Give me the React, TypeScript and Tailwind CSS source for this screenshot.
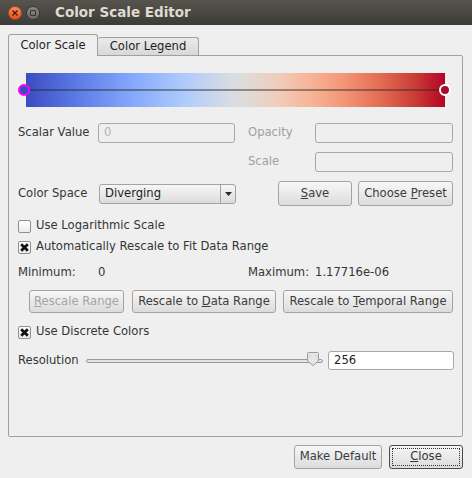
import React from 'react';

const btn =
  'flex items-center justify-center rounded-[3px] border border-[#a3a3a3] bg-gradient-to-b from-[#f7f7f7] to-[#dcdcdc] text-[#3c3c3c]';

function Check({ checked }: { checked: boolean }) {
  return (
    <div className="flex h-[13px] w-[13px] items-center justify-center rounded-[2px] border border-[#8f8f8f] bg-gradient-to-b from-[#ffffff] to-[#ececec]">
      {checked && (
        <svg width="9" height="9" viewBox="0 0 9 9">
          <path d="M1.2 1.2 L7.8 7.8 M7.8 1.2 L1.2 7.8" stroke="#111" strokeWidth="2.8" strokeLinecap="butt" />
        </svg>
      )}
    </div>
  );
}

export default function App() {
  return (
    <div
      className="flex h-[478px] w-[472px] flex-col bg-[#efefef] text-[11.6px] text-[#353535]"
      style={{ fontFamily: '"DejaVu Sans", "Liberation Sans", sans-serif' }}
    >
      {/* title bar */}
      <div className="flex h-[25px] items-center bg-gradient-to-b from-[#56544d] to-[#3c3b37]">
        <div className="ml-[8px] flex h-[14px] w-[14px] items-center justify-center rounded-full border border-[#b8441c] bg-gradient-to-b from-[#f68b5c] to-[#e4511e]">
          <svg width="6" height="6" viewBox="0 0 6 6">
            <path d="M0.5 0.5 L5.5 5.5 M5.5 0.5 L0.5 5.5" stroke="#4a1a08" strokeWidth="1.3" />
          </svg>
        </div>
        <div className="ml-[4px] flex h-[14px] w-[14px] items-center justify-center rounded-full border border-[#3a3935] bg-gradient-to-b from-[#8a8883] to-[#6c6a65]">
          <div className="h-[6px] w-[6px] rounded-[1px] border border-[#33322e]" />
        </div>
        <div className="ml-[15px] text-[13.5px] font-bold text-[#dfdbd2]">Color Scale Editor</div>
      </div>

      {/* tabs */}
      <div className="ml-[8px] mt-[9px] flex items-end">
        <div className="relative z-10 -mb-px flex h-[22px] w-[90px] items-center justify-center rounded-t-[3px] border border-b-0 border-[#a0a0a0] bg-[#efefef] text-[#1e1e1e]">
          Color Scale
        </div>
        <div className="flex h-[18px] w-[101px] items-center justify-center rounded-t-[3px] border border-b-0 border-l-0 border-[#a0a0a0] bg-gradient-to-b from-[#eaeaea] to-[#d8d8d8] text-[#1e1e1e]">
          Color Legend
        </div>
      </div>

      {/* panel */}
      <div className="ml-[8px] h-[382px] w-[455px] rounded-b-[2px] rounded-tr-[2px] border border-[#a0a0a0] bg-[#efefef]">
        {/* gradient */}
        <div className="relative ml-[17px] mt-[17px] h-[34px] w-[419px]">
          <div
            className="h-full w-full"
            style={{
              background:
                'linear-gradient(to right, #3b4cc0 0%, #5b7ae6 12%, #86aafc 26%, #b0ccfb 38%, #d5dbe5 48%, #dedcdb 52%, #f0cdbb 60%, #f7b497 68%, #f39576 76%, #e0654f 86%, #c83b35 93%, #b40426 100%)',
            }}
          />
          <div className="absolute left-0 right-0 top-[16px] h-[2px] bg-[rgba(40,40,40,0.45)]" />
          <div className="absolute left-[-8px] top-[11px] h-[12px] w-[12px] rounded-full border-2 border-[#ff00ff] bg-[#3b4cc0]" />
          <div className="absolute right-[-6px] top-[11px] h-[12px] w-[12px] rounded-full border-2 border-white bg-[#a30a2e]" />
        </div>

        {/* scalar / opacity */}
        <div className="mt-[16px] flex h-[20px] items-center">
          <div className="ml-[9px] w-[80px]">Scalar Value</div>
          <div className="flex h-[20px] w-[137px] items-center rounded-[3px] border border-[#a8a8a8] bg-[#efefef] pl-[5px] text-[#b4b4b4]">
            0
          </div>
          <div className="ml-[13px] w-[67px] text-[#a0a0a0]">Opacity</div>
          <div className="h-[20px] w-[138px] rounded-[3px] border border-[#a8a8a8] bg-[#efefef]" />
        </div>

        {/* scale */}
        <div className="mt-[9px] flex h-[20px] items-center">
          <div className="ml-[239px] w-[67px] text-[#a0a0a0]">Scale</div>
          <div className="h-[20px] w-[138px] rounded-[3px] border border-[#a8a8a8] bg-[#efefef]" />
        </div>

        {/* color space */}
        <div className="mt-[9px] flex h-[25px] items-center">
          <div className="ml-[9px] w-[81px]">Color Space</div>
          <div className="flex h-[20px] w-[137px] items-center rounded-[3px] border border-[#a3a3a3] bg-gradient-to-b from-[#f7f7f7] to-[#dcdcdc]">
            <div className="flex-1 pl-[5px] text-[#1e1e1e]">Diverging</div>
            <div className="flex h-full w-[15px] items-center justify-center border-l border-[#a3a3a3]">
              <svg width="7" height="4" viewBox="0 0 7 4">
                <path d="M0 0 L7 0 L3.5 4 Z" fill="#2a2a2a" />
              </svg>
            </div>
          </div>
          <div className={`${btn} ml-[42px] h-[25px] w-[74px]`}>
            <span>
              <span className="underline">S</span>ave
            </span>
          </div>
          <div className={`${btn} ml-[6px] h-[25px] w-[95px]`}>
            <span>
              Choose <span className="underline">P</span>reset
            </span>
          </div>
        </div>

        {/* checkboxes */}
        <div className="ml-[9px] mt-[12px] flex h-[16px] items-center gap-[5px]">
          <Check checked={false} />
          <span>Use Logarithmic Scale</span>
        </div>
        <div className="ml-[9px] mt-[5px] flex h-[16px] items-center gap-[5px]">
          <Check checked={true} />
          <span>Automatically Rescale to Fit Data Range</span>
        </div>

        {/* min / max */}
        <div className="mt-[10px] flex h-[16px] items-center">
          <div className="ml-[9px] w-[80px]">Minimum:</div>
          <div className="w-[150px]">0</div>
          <div className="w-[67px]">Maximum:</div>
          <div>1.17716e-06</div>
        </div>

        {/* rescale buttons */}
        <div className="mt-[9px] flex h-[23px] items-center">
          <div className={`${btn} ml-[20px] h-[23px] w-[95px] text-[#a5a5a5]`}>
            <span>
              <span className="underline">R</span>escale Range
            </span>
          </div>
          <div className={`${btn} ml-[8px] h-[23px] w-[144px]`}>
            <span>
              Rescale to <span className="underline">D</span>ata Range
            </span>
          </div>
          <div className={`${btn} ml-[7px] h-[23px] w-[170px]`}>
            <span>
              Rescale to <span className="underline">T</span>emporal Range
            </span>
          </div>
        </div>

        {/* discrete */}
        <div className="ml-[9px] mt-[11px] flex h-[16px] items-center gap-[5px]">
          <Check checked={true} />
          <span>Use Discrete Colors</span>
        </div>

        {/* resolution */}
        <div className="mt-[11px] flex h-[19px] items-center">
          <div className="ml-[9px] w-[68px]">Resolution</div>
          <div className="relative flex h-[19px] w-[237px] items-center">
            <div className="h-[4px] w-full rounded-[2px] border border-[#9a9a9a] bg-[#e4e4e4]" />
            <svg className="absolute left-[221px] top-[1px]" width="12" height="14" viewBox="0 0 12 14">
              <path d="M0.5 1.5 Q0.5 0.5 1.5 0.5 L10.5 0.5 Q11.5 0.5 11.5 1.5 L11.5 9 L6 13.5 L0.5 9 Z" fill="#e6e6e6" stroke="#9a9a9a" />
              <path d="M3 3 L3 5 M9 3 L9 5" stroke="#c4c4c4" />
            </svg>
          </div>
          <div className="ml-[5px] flex h-[19px] w-[126px] items-center rounded-[3px] border border-[#a8a8a8] bg-white pl-[5px] text-[#1e1e1e]">
            256
          </div>
        </div>
      </div>

      {/* bottom buttons */}
      <div className="mt-[8px] flex justify-end pr-[9px]">
        <div className={`${btn} h-[24px] w-[88px]`}>Make Default</div>
        <div className="ml-[7px] flex h-[24px] w-[74px] items-center justify-center rounded-[3px] border border-[#4a4a4a] bg-gradient-to-b from-[#f7f7f7] to-[#dcdcdc] p-[2px]">
          <div className="flex h-full w-full items-center justify-center border border-dotted border-[#333]">
            <span>
              <span className="underline">C</span>lose
            </span>
          </div>
        </div>
      </div>
    </div>
  );
}
